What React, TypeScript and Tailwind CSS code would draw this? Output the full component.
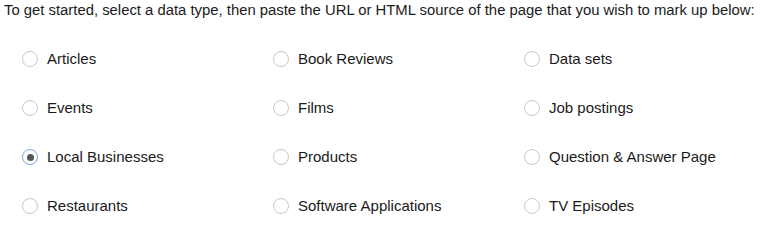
import React from "react";

const items = [
  "Articles", "Book Reviews", "Data sets",
  "Events", "Films", "Job postings",
  "Local Businesses", "Products", "Question & Answer Page",
  "Restaurants", "Software Applications", "TV Episodes",
];

function Radio({ checked }: { checked: boolean }) {
  return checked ? (
    <span className="flex h-4 w-4 shrink-0 items-center justify-center rounded-full border border-[#7fa6e0] bg-white">
      <span className="h-[7px] w-[7px] rounded-full bg-[#555]" />
    </span>
  ) : (
    <span className="h-4 w-4 shrink-0 rounded-full border border-[#c8c8c8] bg-white" />
  );
}

export default function App() {
  return (
    <div className="h-[227px] w-[760px] overflow-hidden bg-white text-[#1a1a1a]" style={{ fontFamily: '"Liberation Sans", Arial, sans-serif' }}>
      <p className="whitespace-nowrap pl-[4px] pt-[1px] text-[14.85px] leading-[18px]">
        To get started, select a data type, then paste the URL or HTML source of the page that you wish to mark up below:
      </p>
      <div className="mt-[28px] grid grid-cols-[251px_251px_251px] pl-[22px]">
        {items.map((label) => (
          <div key={label} className="flex h-[49px] items-start">
            <div className="flex items-center gap-[9px] pt-[3px]">
              <Radio checked={label === "Local Businesses"} />
              <span className="text-[15px] leading-[18px]">{label}</span>
            </div>
          </div>
        ))}
      </div>
    </div>
  );
}
